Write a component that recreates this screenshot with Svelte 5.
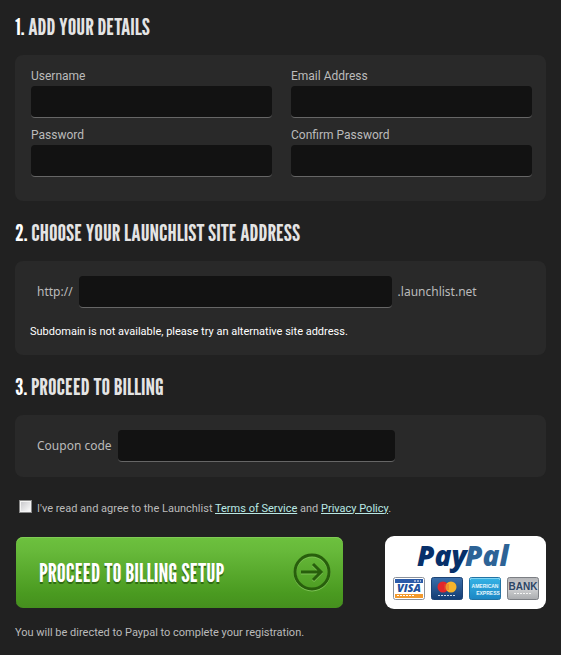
<script>
  let username = $state('');
  let email = $state('');
  let password = $state('');
  let confirm = $state('');
  let site = $state('');
  let coupon = $state('');
  let agreed = $state(false);
</script>

<form class="signup" onsubmit={(e) => e.preventDefault()}>
  <h2><span>1.</span> Add your details</h2>
  <section class="panel details">
    <div class="field">
      <label for="username">Username</label>
      <input id="username" type="text" bind:value={username} />
    </div>
    <div class="field">
      <label for="email">Email Address</label>
      <input id="email" type="email" bind:value={email} />
    </div>
    <div class="field">
      <label for="password">Password</label>
      <input id="password" type="password" bind:value={password} />
    </div>
    <div class="field">
      <label for="confirm">Confirm Password</label>
      <input id="confirm" type="password" bind:value={confirm} />
    </div>
  </section>

  <h2><span>2.</span> Choose your Launchlist site address</h2>
  <section class="panel">
    <div class="row">
      <label for="site">http://</label>
      <input id="site" class="site" type="text" bind:value={site} />
      <span>.launchlist.net</span>
    </div>
    <p class="error">Subdomain is not available, please try an alternative site address.</p>
  </section>

  <h2><span>3.</span> Proceed to billing</h2>
  <section class="panel">
    <div class="row">
      <label for="coupon">Coupon code</label>
      <input id="coupon" class="coupon" type="text" bind:value={coupon} />
    </div>
  </section>

  <div class="terms">
    <input id="agree" type="checkbox" bind:checked={agreed} />
    <label for="agree">I've read and agree to the Launchlist <a href="#terms">Terms of Service</a> and <a href="#privacy">Privacy Policy</a>.</label>
  </div>

  <div class="actions">
    <button type="submit">
      <span>Proceed to billing setup</span>
      <svg width="38" height="39" viewBox="0 0 38 39" fill="none" aria-hidden="true">
        <g stroke="#7cc254" stroke-width="3">
          <circle cx="19" cy="20" r="17" />
          <path d="M8 20h20M20 12l8 8-8 8" />
        </g>
        <g stroke="#285f0c" stroke-width="3">
          <circle cx="19" cy="19" r="17" />
          <path d="M8 19h20M20 11l8 8-8 8" />
        </g>
      </svg>
    </button>

    <div class="paypal">
      <svg viewBox="0 0 161 73" width="161" height="73" role="img" aria-label="PayPal, Visa, MasterCard, American Express, Bank">
        <defs>
          <linearGradient id="mc" x2="0" y2="1"><stop stop-color="#3b6fab" /><stop offset="1" stop-color="#123c73" /></linearGradient>
          <linearGradient id="ax" x2="0" y2="1"><stop stop-color="#35b4e6" /><stop offset="1" stop-color="#1c86c4" /></linearGradient>
          <linearGradient id="bk" x2="0" y2="1"><stop stop-color="#b4b5b8" /><stop offset=".5" stop-color="#d0d1d3" /><stop offset="1" stop-color="#a9abae" /></linearGradient>
        </defs>
        <g class="brand">
          <text x="32" y="30" fill="#07306a">Pay</text>
          <text x="80" y="30" fill="#2d6396">Pal</text>
        </g>
        <g transform="translate(8 41)">
          <rect x=".5" y=".5" width="31" height="22" rx="2" fill="#fff" stroke="#8b919b" />
          <path d="M2 2h28v4H2z" fill="#2b5ba9" />
          <path d="M2 17h28v4H2z" fill="#f29a2e" />
          <path d="M21 4h7" stroke="#fff" stroke-dasharray="2 1" />
          <path d="M4 18.500h17" stroke="#fff" stroke-dasharray="2 1" />
          <text class="visa" x="16" y="15" text-anchor="middle">VISA</text>
        </g>
        <g transform="translate(46 41)">
          <rect x=".5" y=".5" width="31" height="22" rx="2" fill="url(#mc)" stroke="#1d4374" />
          <circle cx="12" cy="10" r="5.500" fill="#e2272c" />
          <circle cx="20" cy="10" r="5.500" fill="#f6b42b" />
          <path d="M13 8h5M13 10h5M13 12h5" stroke="#e2602c" stroke-width=".8" />
          <path d="M7 18.500h17" stroke="#cfdbea" stroke-dasharray="2 1" />
        </g>
        <g transform="translate(84 41)">
          <rect x=".5" y=".5" width="31" height="22" rx="2" fill="url(#ax)" stroke="#2273a4" />
          <path d="M1.500 3V1.500h29V3" stroke="#7fd4f3" fill="none" />
          <g class="amex" text-anchor="middle"><text x="16" y="11">AMERICAN</text><text x="19" y="18">EXPRESS</text></g>
        </g>
        <g transform="translate(122 41)">
          <rect x=".5" y=".5" width="31" height="22" rx="2" fill="url(#bk)" stroke="#7c7f84" />
          <text class="bank" x="16" y="13" text-anchor="middle">BANK</text>
          <path d="M7 16.500h18" stroke="#f5f5f5" stroke-dasharray="2 1" />
        </g>
      </svg>
    </div>
  </div>

  <p class="note">You will be directed to Paypal to complete your registration.</p>
</form>

<style>
  :global(body) {
    margin: 0;
    background: #212121;
  }
  .signup {
    padding: 12px 15px;
    color: #bbb;
    font-family: Tahoma, Roboto, 'Noto Sans', sans-serif;
    font-size: 12px;
    line-height: 16px;
  }
  h2,
  button span {
    font-family: 'League Gothic', 'Open Sans Condensed', 'Roboto Condensed', 'Liberation Sans Narrow', sans-serif;
    font-size: 25px;
    font-weight: 400;
    line-height: 30px;
    text-transform: uppercase;
  }
  h2 {
    margin: 17px 0 13px;
    color: #e4e4e4;
    font-size: 24px;
    white-space: nowrap;
  }
  h2:first-child {
    margin-top: 0;
  }
  h2 span {
    color: #fff;
  }
  .panel {
    padding: 15px;
    border-radius: 8px;
    background: #292929;
  }
  .details {
    display: grid;
    grid-template-columns: 1fr 1fr;
    gap: 9px 19px;
    padding: 13px 14px 24px 16px;
  }
  .field {
    display: flex;
    flex-direction: column;
    gap: 2px;
  }
  .panel input {
    box-sizing: border-box;
    width: 100%;
    height: 32px;
    padding: 0 8px;
    border: 0;
    border-bottom: 1px solid #666;
    border-radius: 4px;
    background: #121212;
    color: #ddd;
    font: inherit;
  }
  .row {
    display: flex;
    align-items: center;
    gap: 6px;
    padding-left: 7px;
    font-family: Tahoma, 'Noto Sans', sans-serif;
  }
  .panel .site {
    flex: 0 1 313px;
  }
  .panel .coupon {
    flex: 0 1 277px;
  }
  .error {
    margin: 16px 0 0;
    color: #fff;
    font-size: 11px;
  }
  .terms,
  .note {
    font-size: 11px;
  }
  .terms {
    display: flex;
    align-items: center;
    gap: 5px;
    margin: 23px 4px 19px;
  }
  .terms input {
    appearance: none;
    box-sizing: border-box;
    width: 13px;
    height: 13px;
    margin: 0 0 4px;
    border: 1px solid #888;
    background: linear-gradient(135deg, #c4c4c8, #fff);
    box-shadow: inset 0 0 0 1px #f4f4f4;
  }
  .terms input:checked {
    background: #3a7d17;
  }
  a {
    color: #b9e8e4;
  }
  .actions {
    display: flex;
    justify-content: space-between;
    align-items: center;
  }
  button {
    display: flex;
    flex: 0 1 327px;
    justify-content: space-between;
    align-items: center;
    height: 71px;
    margin: 0 1px;
    padding: 0 12px 0 23px;
    border: 0;
    border-radius: 7px;
    background: linear-gradient(#6dc13e, #67b93a 20%, #4a9a20 80%, #458f1e);
    box-shadow: inset 0 1px #80cc55;
    color: #fff;
    text-shadow: 0 2px #2f6b12;
    cursor: pointer;
  }
  .paypal {
    height: 73px;
    border-radius: 9px;
    background: #fff;
  }
  .paypal svg {
    display: block;
  }
  .brand {
    font: italic 800 28px 'Open Sans', sans-serif;
  }
  .visa {
    font: italic 800 11px 'Open Sans', sans-serif;
    fill: #20509c;
  }
  .amex {
    font: 700 5px 'Liberation Sans', sans-serif;
    fill: #e8f7fd;
  }
  .bank {
    font: 700 10px 'Liberation Sans', sans-serif;
    fill: #2c4565;
  }
  .note {
    margin: 16px 0 0;
  }
</style>
